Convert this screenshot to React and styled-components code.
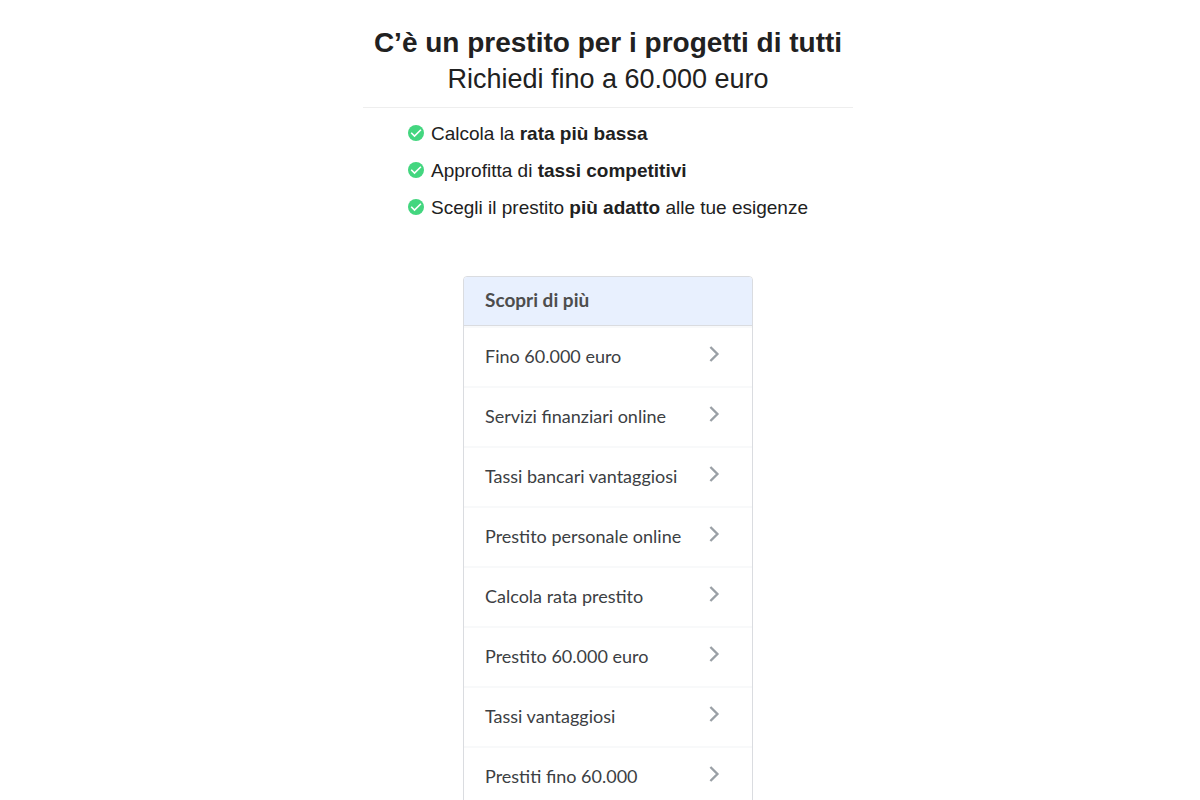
import React from 'react';
import styled, { createGlobalStyle } from 'styled-components';

const GlobalStyle = createGlobalStyle`
  * {
    box-sizing: border-box;
  }
  body {
    margin: 0;
    background-color: #fff;
    color: #202124;
    font-family: 'Liberation Sans', Arial, sans-serif;
  }
`;

const Page = styled.main`
  padding: 25px 0 0 16px;
`;

const Header = styled.header`
  width: 100%;
  max-width: 490px;
  margin: 0 auto;
  padding-bottom: 10px;
  border-bottom: 1px solid #eee;
  color: #212121;
  text-align: center;
`;

const Title = styled.h1`
  margin: 0;
  font-size: 28px;
  line-height: 36px;
  font-weight: 700;
`;

const Subtitle = styled.h2`
  margin: 0;
  font-size: 27px;
  line-height: 36px;
  font-weight: 400;
`;

const Benefits = styled.ul`
  display: flex;
  flex-direction: column;
  gap: 15px;
  width: fit-content;
  margin: 15px auto 0;
  padding: 0;
  list-style: none;
`;

const Benefit = styled.li`
  display: flex;
  align-items: flex-start;
  gap: 7px;
  color: #212121;
  font-size: 19px;
  line-height: 22px;
`;

const BenefitIcon = styled.svg`
  flex: none;
  width: 16px;
  height: 16px;
  margin-top: 2px;
`;

const Card = styled.nav`
  width: 100%;
  max-width: 290px;
  margin: 57px auto 0;
  border: 1px solid #dadce0;
  border-radius: 4px;
  overflow: hidden;
  font-family: 'Google Sans', Lato, sans-serif;
`;

const CardTitle = styled.h3`
  margin: 0;
  padding: 0 21px 2px;
  border-bottom: 1px solid #dadce0;
  background-color: #e8f0fe;
  color: #4d4d4d;
  font-size: 19px;
  line-height: 46px;
  font-weight: 700;
`;

const TopicLink = styled.a`
  display: flex;
  align-items: center;
  justify-content: space-between;
  height: 60px;
  padding: 0 32px 2px 21px;
  border-top: 2px solid #f8f9fa;
  color: #3c4043;
  font-size: 18px;
  line-height: 24px;
  text-decoration: none;
  white-space: nowrap;
`;

const Chevron = styled.svg`
  flex: none;
  width: 12px;
  height: 18px;
  margin-bottom: 4px;
`;

const benefits = [
  { start: 'Calcola la ', strong: 'rata più bassa', end: '' },
  { start: 'Approfitta di ', strong: 'tassi competitivi', end: '' },
  { start: 'Scegli il prestito ', strong: 'più adatto', end: ' alle tue esigenze' },
];

const topics = [
  'Fino 60.000 euro',
  'Servizi finanziari online',
  'Tassi bancari vantaggiosi',
  'Prestito personale online',
  'Calcola rata prestito',
  'Prestito 60.000 euro',
  'Tassi vantaggiosi',
  'Prestiti fino 60.000',
];

const App = () => {
  return (
    <>
      <GlobalStyle />
      <Page>
        <Header>
          <Title>C’è un prestito per i progetti di tutti</Title>
          <Subtitle>Richiedi fino a 60.000 euro</Subtitle>
        </Header>
        <Benefits>
          {benefits.map((item) => (
            <Benefit key={item.strong}>
              <BenefitIcon viewBox="0 0 16 16" aria-hidden="true">
                <circle cx="8" cy="8" r="8" fill="#43d67f" />
                <path d="M3.2 7.8l3.3 3.3 6.4-6.4" fill="none" stroke="#fff" strokeWidth="1.6" />
              </BenefitIcon>
              <span>
                {item.start}
                <strong>{item.strong}</strong>
                {item.end}
              </span>
            </Benefit>
          ))}
        </Benefits>
        <Card aria-labelledby="topics-title">
          <CardTitle id="topics-title">Scopri di più</CardTitle>
          {topics.map((topic) => (
            <TopicLink key={topic} href="#">
              {topic}
              <Chevron viewBox="0 0 12 18" aria-hidden="true">
                <path d="M2.4 2l7 7-7 7" fill="none" stroke="#9aa0a6" strokeWidth="2.4" />
              </Chevron>
            </TopicLink>
          ))}
        </Card>
      </Page>
    </>
  );
};

export default App;
